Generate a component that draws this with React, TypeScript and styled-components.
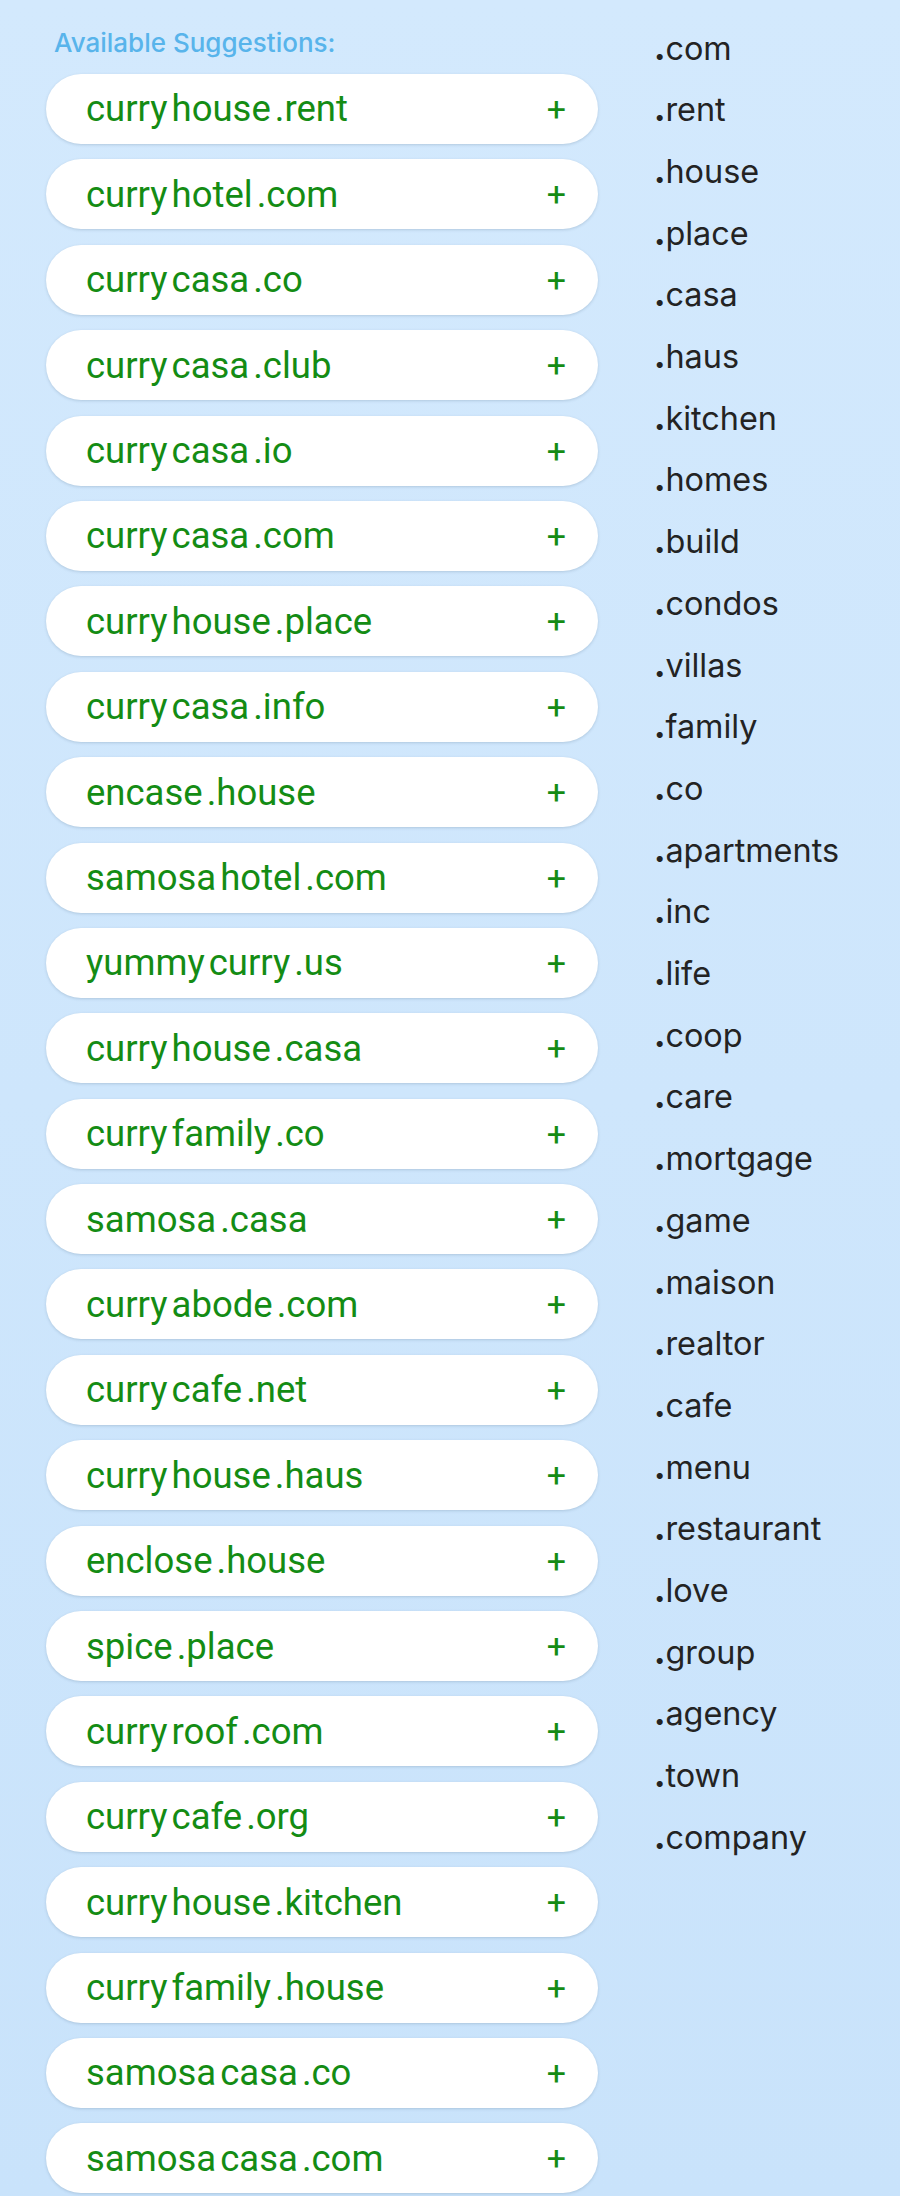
import styled, { createGlobalStyle } from 'styled-components';

const suggestions: string[][] = [
    ['curry', 'house', '.rent'],
    ['curry', 'hotel', '.com'],
    ['curry', 'casa', '.co'],
    ['curry', 'casa', '.club'],
    ['curry', 'casa', '.io'],
    ['curry', 'casa', '.com'],
    ['curry', 'house', '.place'],
    ['curry', 'casa', '.info'],
    ['encase', '.house'],
    ['samosa', 'hotel', '.com'],
    ['yummy', 'curry', '.us'],
    ['curry', 'house', '.casa'],
    ['curry', 'family', '.co'],
    ['samosa', '.casa'],
    ['curry', 'abode', '.com'],
    ['curry', 'cafe', '.net'],
    ['curry', 'house', '.haus'],
    ['enclose', '.house'],
    ['spice', '.place'],
    ['curry', 'roof', '.com'],
    ['curry', 'cafe', '.org'],
    ['curry', 'house', '.kitchen'],
    ['curry', 'family', '.house'],
    ['samosa', 'casa', '.co'],
    ['samosa', 'casa', '.com'],
];

const tlds = [
    'com', 'rent', 'house', 'place', 'casa', 'haus', 'kitchen', 'homes',
    'build', 'condos', 'villas', 'family', 'co', 'apartments', 'inc', 'life',
    'coop', 'care', 'mortgage', 'game', 'maison', 'realtor', 'cafe', 'menu',
    'restaurant', 'love', 'group', 'agency', 'town', 'company',
];

export default function App() {
    return (
        <>
            <GlobalStyle />
            <Page>
                <Suggestions>
                    <Heading>Available Suggestions:</Heading>
                    {suggestions.map((parts) => (
                        <Pill key={parts.join('')}>
                            <Name>
                                {parts.map((p) => (
                                    <span key={p}>{p}</span>
                                ))}
                            </Name>
                            <Plus>+</Plus>
                        </Pill>
                    ))}
                </Suggestions>
                <TldList>
                    {tlds.map((t) => (
                        <Tld key={t}>
                            <Dot>.</Dot>
                            {t}
                        </Tld>
                    ))}
                </TldList>
            </Page>
        </>
    );
}

const GlobalStyle = createGlobalStyle`
    html, body {
        margin: 0;
        padding: 0;
    }
    body {
        background: linear-gradient(180deg, #d3e9fd 0%, #c9e3fb 100%);
        min-height: 2196px;
    }
`;

const Page = styled.div`
    display: grid;
    grid-template-columns: 552px 1fr;
    column-gap: 56px;
    padding-left: 46px;
    height: 2196px;
    overflow: hidden;
    box-sizing: border-box;
`;

const Suggestions = styled.div`
    display: flex;
    flex-direction: column;
    gap: 15.4px;
    padding-top: 28px;
`;

const Heading = styled.div`
    font-family: Inter, 'Noto Sans', sans-serif;
    font-size: 26px;
    font-weight: 500;
    color: #58b4eb;
    padding-left: 8px;
    line-height: 30px;
    margin-bottom: 0.6px;
`;

const Pill = styled.div`
    display: flex;
    align-items: center;
    justify-content: space-between;
    height: 70px;
    padding: 0 32px 0 40px;
    background: #ffffff;
    border-radius: 35px;
    box-shadow: 0 1px 3px rgba(60, 90, 120, 0.22);
    box-sizing: border-box;
`;

const Name = styled.div`
    display: flex;
    gap: 4px;
    font-family: Roboto, 'Liberation Sans', sans-serif;
    font-size: 36.5px;
    color: #148c14;
`;

const Plus = styled.span`
    font-family: Roboto, 'Liberation Sans', sans-serif;
    font-size: 34px;
    line-height: 1;
    color: #148c14;
`;

const TldList = styled.div`
    display: flex;
    flex-direction: column;
    padding-top: 17.5px;
`;

const Tld = styled.div`
    font-family: Inter, 'Noto Sans', sans-serif;
    font-size: 32.4px;
    line-height: 61.7px;
    color: #232323;
`;

const Dot = styled.span`
    font-weight: 800;
`;
